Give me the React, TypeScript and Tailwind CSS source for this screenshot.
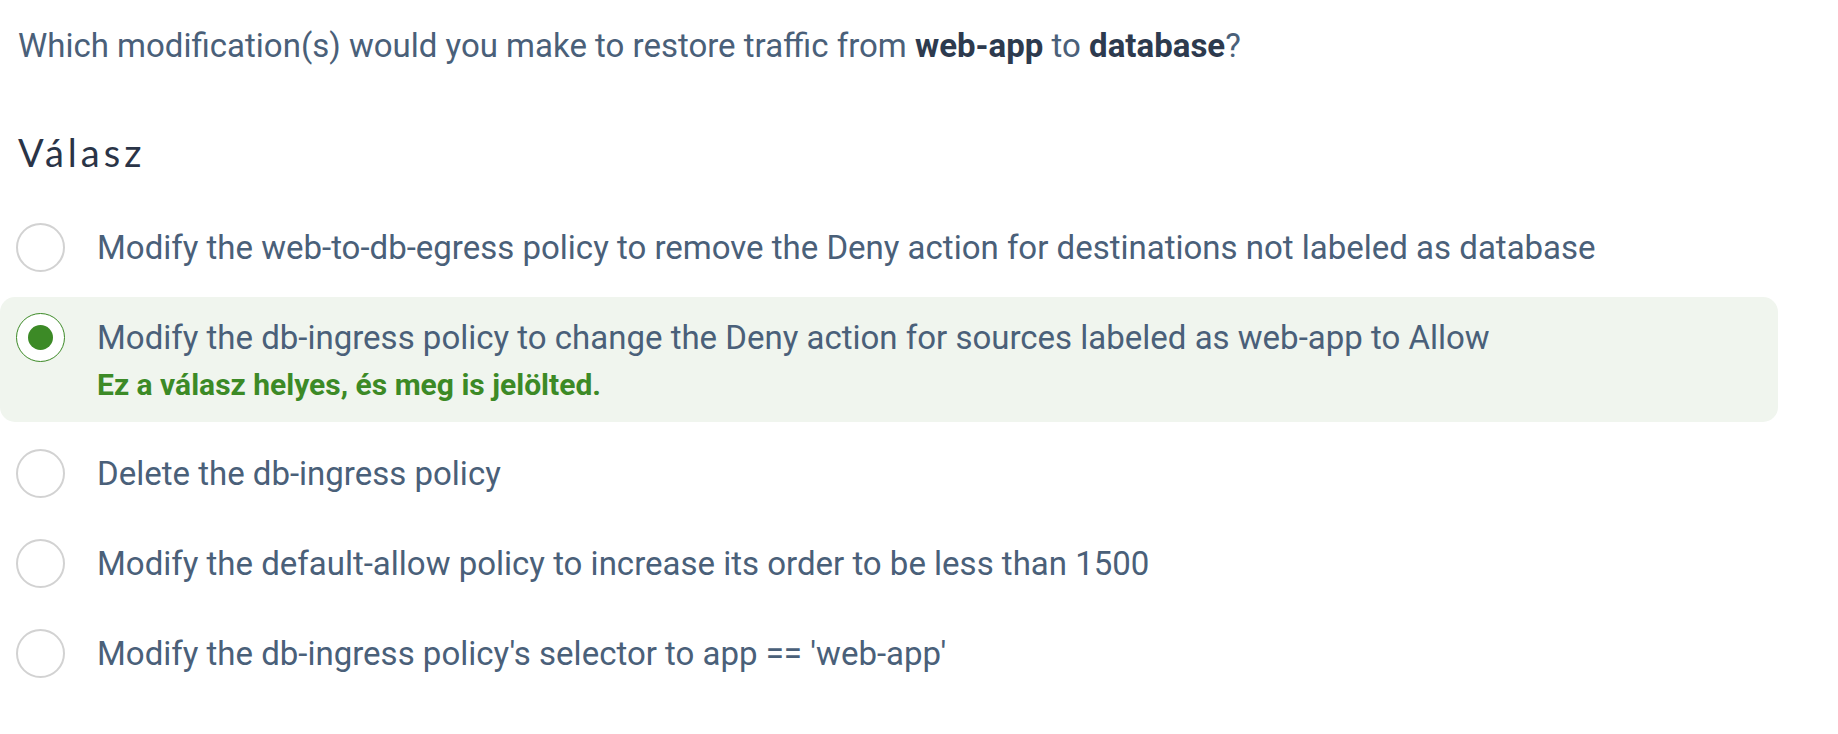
const options = [
  { text: "Modify the web-to-db-egress policy to remove the Deny action for destinations not labeled as database", checked: false },
  { text: "Modify the db-ingress policy to change the Deny action for sources labeled as web-app to Allow", checked: true, note: "Ez a válasz helyes, és meg is jelölted." },
  { text: "Delete the db-ingress policy", checked: false },
  { text: "Modify the default-allow policy to increase its order to be less than 1500", checked: false },
  { text: "Modify the db-ingress policy's selector to app == 'web-app'", checked: false },
];

function Radio({ checked }: { checked: boolean }) {
  if (checked) {
    return (
      <span className="flex h-[49px] w-[49px] shrink-0 items-center justify-center rounded-full border-[1.5px] border-[#3c8a26] bg-white">
        <span className="h-[25px] w-[25px] rounded-full bg-[#3c8a26]" />
      </span>
    );
  }
  return <span className="h-[49px] w-[49px] shrink-0 rounded-full border-2 border-[#d2d2d2] bg-white" />;
}

export default function App() {
  return (
    <main className="min-h-screen bg-white pl-[18px] pt-[26px] font-['Roboto',sans-serif]">
      <p className="text-[33px] leading-[40px] text-[#4a6079]">
        Which modification(s) would you make to restore traffic from{" "}
        <b className="font-bold text-[#2d3a4e]">web-app</b> to{" "}
        <b className="font-bold text-[#2d3a4e]">database</b>?
      </p>
      <h2 className="mt-[62px] font-['Lato',sans-serif] text-[38px] leading-[48px] tracking-[4px] text-[#2a3447]">
        Válasz
      </h2>
      <div className="mt-[29px] -ml-[18px] flex w-[1778px] flex-col gap-[5px]">
        {options.map((o, i) => (
          <div
            key={i}
            className={`flex items-start gap-[32px] rounded-[15px] px-[16px] ${
              o.checked ? "mb-[4px] mt-[2px] bg-[#f0f5ee] py-[20px]" : "py-[22px]"
            }`}
          >
            <div className="flex h-[41px] items-center">
              <Radio checked={o.checked} />
            </div>
            <div>
              <p className="text-[33px] leading-[41px] text-[#4a6079]">{o.text}</p>
              {o.note && (
                <p className="mt-[10px] text-[30px] font-bold leading-[34px] text-[#3c8a26]">{o.note}</p>
              )}
            </div>
          </div>
        ))}
      </div>
    </main>
  );
}
